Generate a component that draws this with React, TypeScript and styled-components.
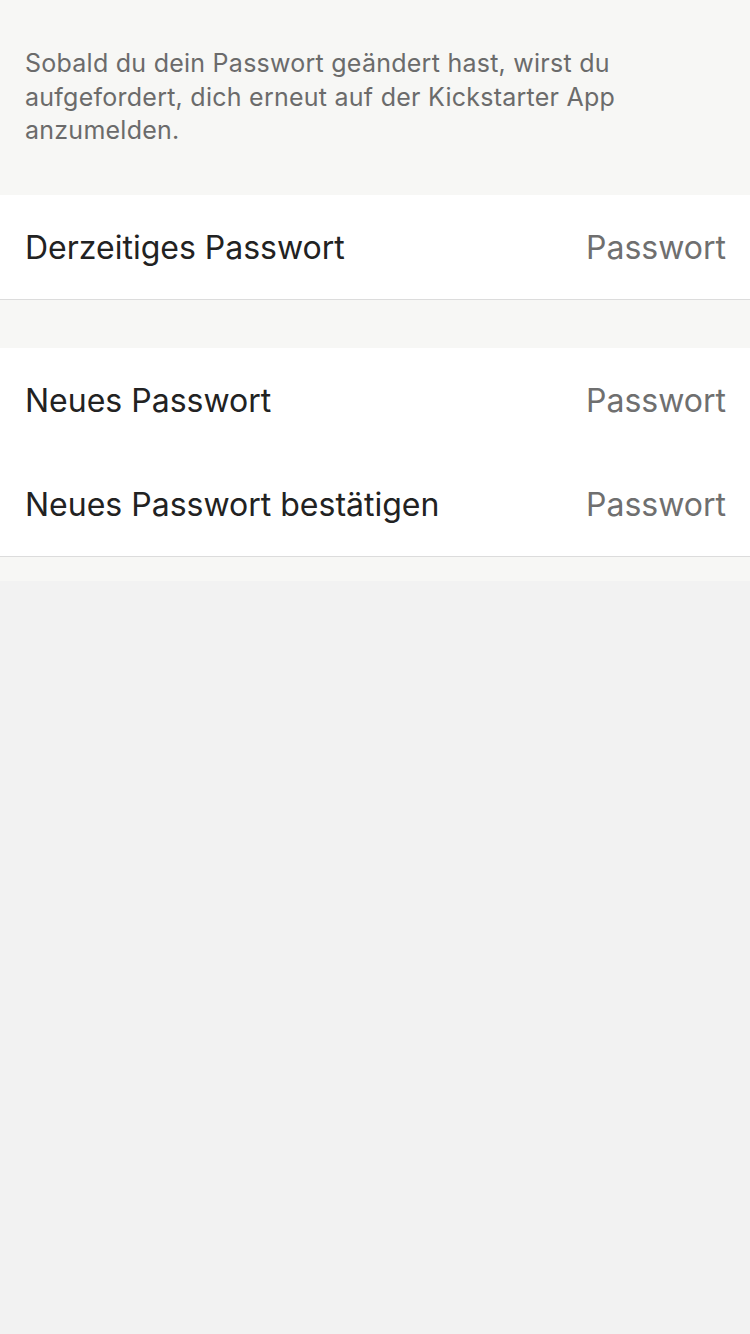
import React from "react";
import styled, { createGlobalStyle } from "styled-components";

const Global = createGlobalStyle`
  html, body { margin: 0; padding: 0; }
  body { background: #f2f2f2; font-family: Inter, "Noto Sans", sans-serif; }
`;

const Page = styled.div`
  width: 750px;
  min-height: 1334px;
  background: #f2f2f2;
  display: flex;
  flex-direction: column;
`;

const Header = styled.div`
  background: #f7f7f5;
  height: 195px;
  box-sizing: border-box;
  padding: 47px 100px 0 25px;
  font-size: 25px;
  line-height: 33.5px;
  color: #6b6b6b;
  letter-spacing: 0.25px;
`;

const Group = styled.div`
  background: #ffffff;
  border-bottom: 1px solid #dcdcdc;
`;

const Spacer = styled.div<{ $h: number }>`
  height: ${(p) => p.$h}px;
  background: #f7f7f5;
`;

const Row = styled.div`
  height: 104px;
  display: flex;
  align-items: center;
  justify-content: space-between;
  padding: 0 24px 0 25px;
`;

const Label = styled.span`
  font-size: 32px;
  color: #222222;
`;

const Placeholder = styled.span`
  font-size: 32px;
  color: #6f6f6f;
`;

const Field = ({ label }: { label: string }) => (
  <Row>
    <Label>{label}</Label>
    <Placeholder>Passwort</Placeholder>
  </Row>
);

export default function App() {
  return (
    <Page>
      <Global />
      <Header>
        Sobald du dein Passwort geändert hast, wirst du aufgefordert, dich erneut auf der Kickstarter App anzumelden.
      </Header>
      <Group>
        <Field label="Derzeitiges Passwort" />
      </Group>
      <Spacer $h={48} />
      <Group>
        <Field label="Neues Passwort" />
        <Field label="Neues Passwort bestätigen" />
      </Group>
      <Spacer $h={24} />
    </Page>
  );
}
